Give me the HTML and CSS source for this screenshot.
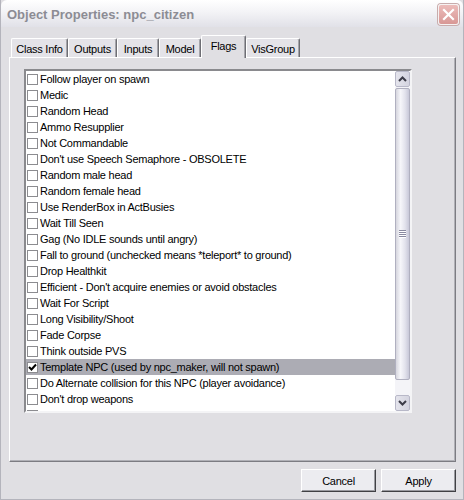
FILE: index.html
```html
<!DOCTYPE html>
<html>
<head>
<meta charset="utf-8">
<link rel="stylesheet" href="styles.css">
</head>
<body>
<div class="window">
  <div class="titlebar">
    <span class="title">Object Properties: npc_citizen</span>
    <div class="close">
      <svg width="13" height="13" viewBox="0 0 13 13"><path d="M2 2 L11 11 M11 2 L2 11" stroke="#fff" stroke-width="2.2" stroke-linecap="square" fill="none"/></svg>
    </div>
  </div>
  <div class="content">
    <div class="tabs">
      <div class="tab w1">Class Info</div>
      <div class="tab w2">Outputs</div>
      <div class="tab w3">Inputs</div>
      <div class="tab w4">Model</div>
      <div class="tab w5 active">Flags</div>
      <div class="tab w6">VisGroup</div>
    </div>
    <div class="panel">
      <div class="list">
        <div class="items">
          <div class="row"><span class="cb"></span><span>Follow player on spawn</span></div>
          <div class="row"><span class="cb"></span><span>Medic</span></div>
          <div class="row"><span class="cb"></span><span>Random Head</span></div>
          <div class="row"><span class="cb"></span><span>Ammo Resupplier</span></div>
          <div class="row"><span class="cb"></span><span>Not Commandable</span></div>
          <div class="row"><span class="cb"></span><span>Don't use Speech Semaphore - OBSOLETE</span></div>
          <div class="row"><span class="cb"></span><span>Random male head</span></div>
          <div class="row"><span class="cb"></span><span>Random female head</span></div>
          <div class="row"><span class="cb"></span><span>Use RenderBox in ActBusies</span></div>
          <div class="row"><span class="cb"></span><span>Wait Till Seen</span></div>
          <div class="row"><span class="cb"></span><span>Gag (No IDLE sounds until angry)</span></div>
          <div class="row"><span class="cb"></span><span>Fall to ground (unchecked means *teleport* to ground)</span></div>
          <div class="row"><span class="cb"></span><span>Drop Healthkit</span></div>
          <div class="row"><span class="cb"></span><span>Efficient - Don't acquire enemies or avoid obstacles</span></div>
          <div class="row"><span class="cb"></span><span>Wait For Script</span></div>
          <div class="row"><span class="cb"></span><span>Long Visibility/Shoot</span></div>
          <div class="row"><span class="cb"></span><span>Fade Corpse</span></div>
          <div class="row"><span class="cb"></span><span>Think outside PVS</span></div>
          <div class="row selected"><span class="cb"><svg width="9" height="9" viewBox="0 0 9 9"><path d="M1 4 L3.5 6.5 L8 1.5" stroke="#000" stroke-width="2" fill="none"/></svg></span><span>Template NPC (used by npc_maker, will not spawn)</span></div>
          <div class="row"><span class="cb"></span><span>Do Alternate collision for this NPC (player avoidance)</span></div>
          <div class="row"><span class="cb"></span><span>Don't drop weapons</span></div>
          <div class="row"><span class="cb"></span><span>Ignore player push (dont give way to player)</span></div>
        </div>
        <div class="scrollbar">
          <div class="sbtn">
            <svg width="9" height="6" viewBox="0 0 9 6"><path d="M1 5 L4.5 1.5 L8 5" stroke="#3c3c48" stroke-width="2" fill="none"/></svg>
          </div>
          <div class="track">
            <div class="thumb"><span class="grip"></span></div>
          </div>
          <div class="sbtn">
            <svg width="9" height="6" viewBox="0 0 9 6"><path d="M1 1 L4.5 4.5 L8 1" stroke="#3c3c48" stroke-width="2" fill="none"/></svg>
          </div>
        </div>
      </div>
    </div>
    <div class="buttons">
      <div class="btn">Cancel</div>
      <div class="btn">Apply</div>
    </div>
  </div>
</div>
</body>
</html>
```

FILE: styles.css
```css
* { box-sizing: border-box; }
body {
  margin: 0;
  font-family: "Liberation Sans", Arial, sans-serif;
  font-size: 11px;
  letter-spacing: -0.25px;
  color: #000;
  background: #e0dfe3;
}
.window {
  width: 464px;
  height: 500px;
  background: #e0dfe3;
  border: 1px solid #b4b4bc;
  border-top: none;
  display: flex;
  flex-direction: column;
}
.titlebar {
  height: 27px;
  flex: none;
  display: flex;
  align-items: center;
  justify-content: space-between;
  padding: 0 4px 0 6px;
  background: linear-gradient(to bottom, #ffffff 0%, #f3f3f6 45%, #e1e1e8 100%);
  border-radius: 6px 6px 0 0;
}
.title {
  font-weight: bold;
  font-size: 13px;
  letter-spacing: 0;
  color: #8c8c94;
  padding-top: 1px;
}
.close {
  width: 21px;
  height: 21px;
  margin-top: 2px;
  border-radius: 3px;
  border: 1px solid #f6f2f2;
  background: linear-gradient(to bottom, #ecbcba, #d89896);
  display: flex;
  align-items: center;
  justify-content: center;
  box-shadow: 0 0 0 1px #c8acac;
}
.content {
  flex: 1;
  display: flex;
  flex-direction: column;
  padding: 8px 7px 7px 8px;
}
.tabs {
  height: 22px;
  display: flex;
  align-items: flex-end;
  padding-left: 2px;
}
.tab {
  height: 19px;
  display: flex;
  align-items: center;
  justify-content: center;
  padding-top: 1px;
  background: #e4e3e8;
  border-top: 1px solid #ffffff;
  border-left: 1px solid #ffffff;
  border-right: 1px solid #6e6e74;
  box-shadow: inset -1px 0 0 #a4a4aa;
  border-radius: 2px 2px 0 0;
}
.tab.active {
  height: 23px;
  margin-bottom: -1px;
  background: #e0dfe3;
  z-index: 1;
  padding-bottom: 3px;
}
.w1 { width: 57px; }
.w2 { width: 49px; }
.w3 { width: 42px; }
.w4 { width: 42px; }
.w5 { width: 45px; }
.w6 { width: 54px; }
.panel {
  height: 405px;
  border-top: 1px solid #ffffff;
  border-left: 1px solid #ffffff;
  border-right: 1px solid #7c7c82;
  border-bottom: 1px solid #7c7c82;
  box-shadow: inset -1px -1px 0 #b0b0b6;
  padding: 11px 0 0 14px;
}
.list {
  width: 388px;
  height: 344px;
  display: flex;
  background: #fff;
  border-top: 2px solid #8a8a8e;
  border-left: 2px solid #8a8a8e;
  border-right: 2px solid #f4f4f6;
  border-bottom: 2px solid #f4f4f6;
}
.items {
  flex: 1;
  overflow: hidden;
}
.row {
  height: 16px;
  display: flex;
  align-items: center;
  padding-left: 1px;
  white-space: nowrap;
}
.row.selected {
  background: #acacb4;
}
.cb {
  width: 11px;
  height: 11px;
  flex: none;
  margin-right: 2px;
  border: 1px solid #8c8c90;
  background: #fff;
  display: flex;
  align-items: center;
  justify-content: center;
}
.scrollbar {
  width: 15px;
  flex: none;
  display: flex;
  flex-direction: column;
}
.sbtn {
  height: 16px;
  flex: none;
  display: flex;
  align-items: center;
  justify-content: center;
  background: linear-gradient(to right, #e4e4ec, #d4d4e0);
  border: 1px solid #b8b8c8;
  border-radius: 2px;
}
.track {
  flex: 1;
  background: #f4f4f8;
  padding-top: 1px;
}
.thumb {
  height: 292px;
  border: 1px solid #b0b0c0;
  border-radius: 2px;
  background: linear-gradient(to right, #d6d6de 0%, #f6f6fa 35%, #e2e2ec 70%, #c8c8d8 100%);
  display: flex;
  align-items: center;
  justify-content: center;
}
.grip {
  width: 7px;
  height: 8px;
  background: repeating-linear-gradient(to bottom, #8a8aa0 0 1px, #ffffff 1px 2px);
}
.buttons {
  display: flex;
  justify-content: flex-end;
  gap: 5px;
  margin-top: 7px;
}
.btn {
  width: 75px;
  height: 23px;
  display: flex;
  align-items: center;
  justify-content: center;
  background: #ececf0;
  border-top: 1px solid #ffffff;
  border-left: 1px solid #ffffff;
  border-right: 1px solid #404044;
  border-bottom: 1px solid #404044;
  box-shadow: inset -1px -1px 0 #9a9aa0;
}
```
